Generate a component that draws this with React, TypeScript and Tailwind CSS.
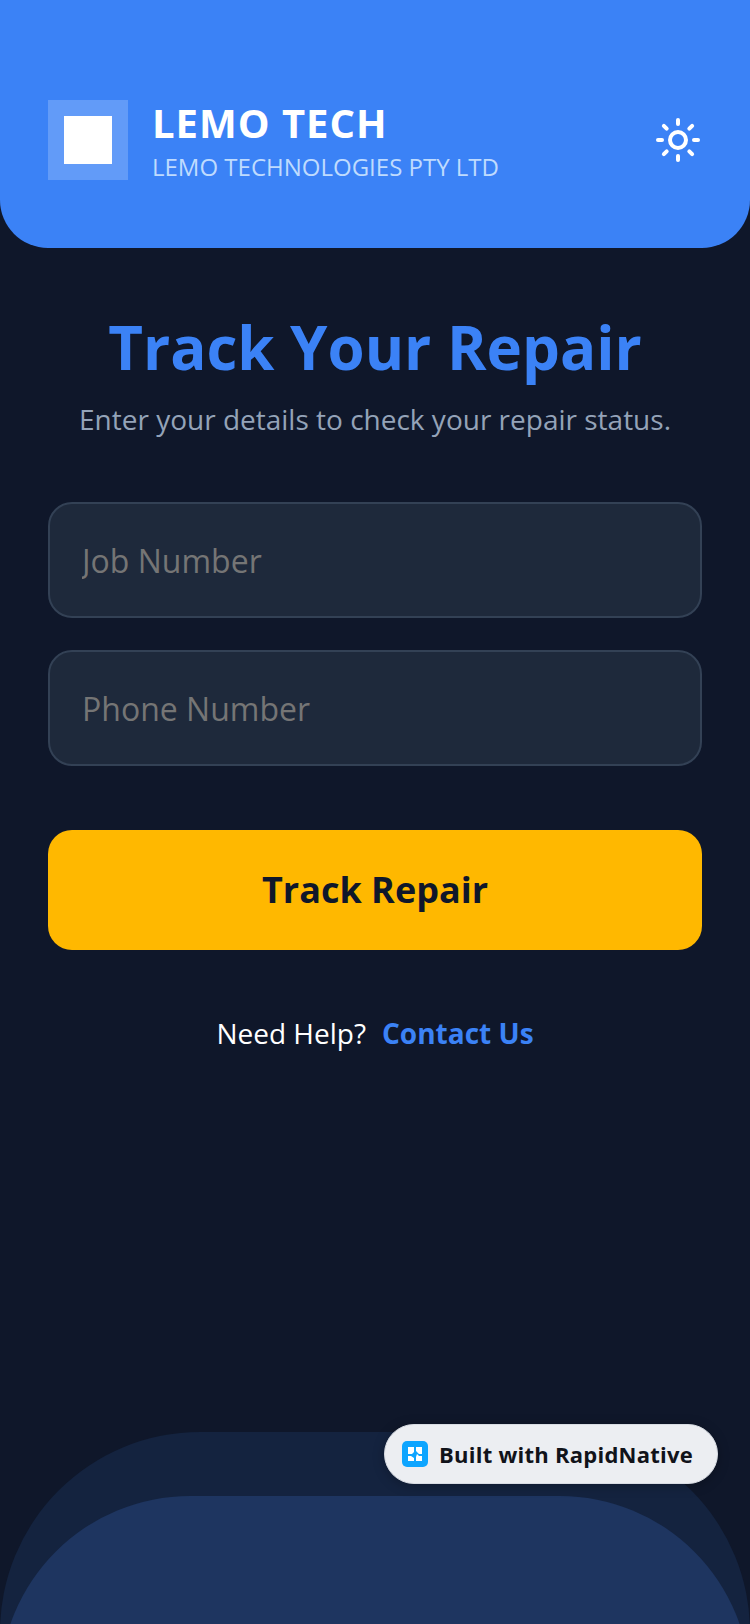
import { Sun } from "lucide-react";

function RapidNativeMark() {
  return (
    <svg viewBox="0 0 26 26" className="w-[26px] h-[26px] shrink-0">
      <rect width="26" height="26" rx="5" fill="#0ea5ff" />
      <path d="M6 6h6v5l-2 2H6zM14 6h6v7h-3l-3-3zM6 15h3l3 2v3H6zM15 13l2 2h3v5h-6v-4z" fill="#fff" />
    </svg>
  );
}

function Field({ placeholder }: { placeholder: string }) {
  return (
    <input
      placeholder={placeholder}
      className="w-full h-[116px] px-[32px] rounded-[24px] border-2 border-[#334155] bg-[#1e293b] text-[32px] text-white placeholder:text-[#757575] outline-none"
    />
  );
}

export default function App() {
  return (
    <div className="relative h-[1624px] w-full overflow-hidden bg-[#0f172a] font-['Open_Sans',sans-serif]">
      {/* background shapes */}
      <div className="absolute left-0 top-[1432px] w-[750px] h-[400px] rounded-[200px] bg-[#14233f]" />
      <div className="absolute left-0 top-[1496px] w-[750px] h-[400px] rounded-[190px] bg-[#1e3560]" />

      <div className="relative flex flex-col">
        <header className="flex items-center justify-between h-[248px] pt-[32px] pl-[48px] pr-[48px] bg-[#3b82f6] rounded-b-[48px]">
          <div className="flex items-center gap-[24px]">
            <div className="flex items-center justify-center w-[80px] h-[80px] bg-[#629bf8]">
              <div className="w-[48px] h-[48px] bg-white" />
            </div>
            <div className="flex flex-col pt-[2px]">
              <span className="text-[40px] leading-[50px] font-bold tracking-[1px] text-white">LEMO TECH</span>
              <span className="mt-[2px] text-[24px] leading-[34px] text-[#bfdbfe]">LEMO TECHNOLOGIES PTY LTD</span>
            </div>
          </div>
          <Sun size={48} color="#ffffff" strokeWidth={2} />
        </header>

        <main className="flex flex-col px-[48px]">
          <h1 className="mt-[63px] text-center text-[60px] leading-[72px] font-bold text-[#3b82f6]">Track Your Repair</h1>
          <p className="mt-[16px] text-center text-[28px] leading-[40px] text-[#94a3b8]">Enter your details to check your repair status.</p>

          <div className="mt-[63px] flex flex-col gap-[32px]">
            <Field placeholder="Job Number" />
            <Field placeholder="Phone Number" />
          </div>

          <button className="mt-[64px] h-[120px] rounded-[24px] bg-[#ffb800] text-[36px] font-bold text-[#0f172a]">
            Track Repair
          </button>

          <div className="mt-[63px] flex items-center justify-center gap-[16px] text-[28px] leading-[40px]">
            <span className="text-white">Need Help?</span>
            <span className="font-bold text-[#3b82f6]">Contact Us</span>
          </div>
        </main>
      </div>

      <div className="absolute left-[384px] top-[1424px] flex items-center gap-[11px] w-[334px] h-[60px] pl-[17px] rounded-full bg-[#eceef2] border border-[#d8dce3] shadow-[0_2px_12px_rgba(0,0,0,0.25)]">
        <RapidNativeMark />
        <span className="text-[22px] font-bold tracking-[0.25px] text-[#11131a]">Built with RapidNative</span>
      </div>
    </div>
  );
}
